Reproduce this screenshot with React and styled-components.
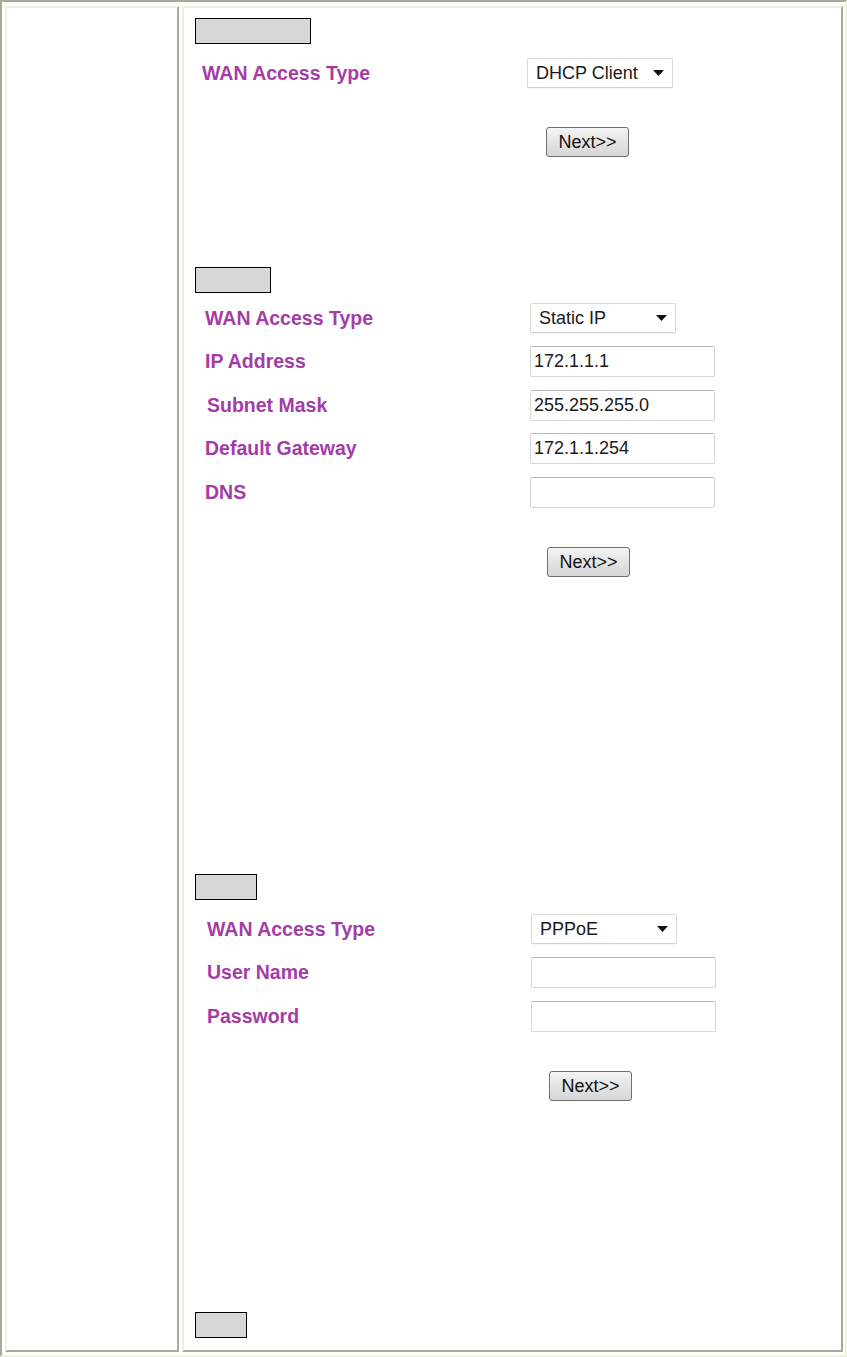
import styled, { createGlobalStyle } from "styled-components";

const GlobalStyle = createGlobalStyle`
  html, body {
    margin: 0;
    padding: 0;
    background: #ffffff;
  }
  body {
    font-family: "Liberation Sans", Arial, sans-serif;
  }
`;

const Frame = styled.div`
  box-sizing: border-box;
  width: 847px;
  height: 1357px;
  display: flex;
  gap: 3px;
  padding: 4px 2px 3px 3px;
  border-top: 2px solid #aca899;
  border-left: 2px solid #aca899;
  border-right: 2px solid #f1efe2;
  border-bottom: 2px solid #f1efe2;
  background: #fff;
`;

const Cell = styled.div`
  box-sizing: border-box;
  width: ${(p) => p.$w}px;
  flex-shrink: 0;
  height: 100%;
  border-top: 2px solid #f1efe2;
  border-left: 2px solid #f1efe2;
  border-right: 2px solid #aca899;
  border-bottom: 2px solid #aca899;
  display: flex;
  flex-direction: column;
`;

const Section = styled.section`
  height: ${(p) => p.$h}px;
  flex-shrink: 0;
  display: flex;
  flex-direction: column;
`;

const TagBox = styled.div`
  box-sizing: border-box;
  width: ${(p) => p.$w}px;
  height: 26px;
  margin: 10px 0 0 11px;
  background: #d7d7d7;
  border: 1px solid #000;
`;

const Rows = styled.div`
  display: flex;
  flex-direction: column;
  gap: 13.5px;
  margin-top: ${(p) => p.$top}px;
  padding-left: ${(p) => p.$labelX}px;
`;

const Row = styled.div`
  display: flex;
  align-items: center;
  height: 30px;
`;

const Label = styled.div`
  width: ${(p) => p.$w}px;
  flex-shrink: 0;
  padding-left: ${(p) => p.$nudge || 0}px;
  box-sizing: border-box;
  font-size: 19.5px;
  font-weight: bold;
  color: #a43ca6;
`;

const SelectBox = styled.div`
  box-sizing: border-box;
  width: 146px;
  height: 30px;
  display: flex;
  align-items: center;
  justify-content: space-between;
  padding: 0 8px 0 8px;
  background: #fff;
  border: 1px solid #dadada;
  border-bottom-color: #cfcfcf;
  border-radius: 2px;
  box-shadow: 0 1px 1px rgba(0, 0, 0, 0.05);
  font-size: 18px;
  color: #1a1a1a;
`;

const TextBox = styled.div`
  box-sizing: border-box;
  width: 185px;
  height: 31px;
  display: flex;
  align-items: center;
  padding-left: 3px;
  background: #fff;
  border: 1px solid #d6d6d6;
  border-top-color: #bdbdbd;
  border-radius: 2px;
  font-size: 18px;
  color: #1a1a1a;
`;

const ButtonWrap = styled.div`
  margin-top: ${(p) => p.$top}px;
  padding-left: ${(p) => p.$x}px;
`;

const NextButton = styled.button`
  box-sizing: border-box;
  width: 83px;
  height: 30px;
  padding: 0;
  border: 1px solid #707070;
  border-radius: 3px;
  background: linear-gradient(#f4f4f4, #e4e4e4 50%, #d6d6d6);
  font-family: "Liberation Sans", Arial, sans-serif;
  font-size: 18px;
  color: #111;
  cursor: pointer;
`;

const Arrow = () => (
  <svg width="11" height="6" viewBox="0 0 11 6">
    <path d="M0 0 L11 0 L5.5 6 Z" fill="#111" />
  </svg>
);

const Select = ({ value }) => (
  <SelectBox>
    <span>{value}</span>
    <Arrow />
  </SelectBox>
);

export default function App() {
  return (
    <>
      <GlobalStyle />
      <Frame>
        <Cell $w={174} />
        <Cell $w={661}>
          <Section $h={249}>
            <TagBox $w={116} />
            <Rows $top={14} $labelX={18}>
              <Row>
                <Label $w={325}>WAN Access Type</Label>
                <Select value="DHCP Client" />
              </Row>
            </Rows>
            <ButtonWrap $top={39} $x={362}>
              <NextButton>Next&gt;&gt;</NextButton>
            </ButtonWrap>
          </Section>

          <Section $h={607}>
            <TagBox $w={76} />
            <Rows $top={10} $labelX={21}>
              <Row>
                <Label $w={325}>WAN Access Type</Label>
                <Select value="Static IP" />
              </Row>
              <Row>
                <Label $w={325}>IP Address</Label>
                <TextBox>172.1.1.1</TextBox>
              </Row>
              <Row>
                <Label $w={325} $nudge={2}>Subnet Mask</Label>
                <TextBox>255.255.255.0</TextBox>
              </Row>
              <Row>
                <Label $w={325}>Default Gateway</Label>
                <TextBox>172.1.1.254</TextBox>
              </Row>
              <Row>
                <Label $w={325}>DNS</Label>
                <TextBox />
              </Row>
            </Rows>
            <ButtonWrap $top={40} $x={363}>
              <NextButton>Next&gt;&gt;</NextButton>
            </ButtonWrap>
          </Section>

          <Section $h={438}>
            <TagBox $w={62} />
            <Rows $top={14} $labelX={23}>
              <Row>
                <Label $w={324}>WAN Access Type</Label>
                <Select value="PPPoE" />
              </Row>
              <Row>
                <Label $w={324}>User Name</Label>
                <TextBox />
              </Row>
              <Row>
                <Label $w={324}>Password</Label>
                <TextBox />
              </Row>
            </Rows>
            <ButtonWrap $top={40} $x={365}>
              <NextButton>Next&gt;&gt;</NextButton>
            </ButtonWrap>
          </Section>

          <Section $h={40}>
            <TagBox $w={52} />
          </Section>
        </Cell>
      </Frame>
    </>
  );
}
